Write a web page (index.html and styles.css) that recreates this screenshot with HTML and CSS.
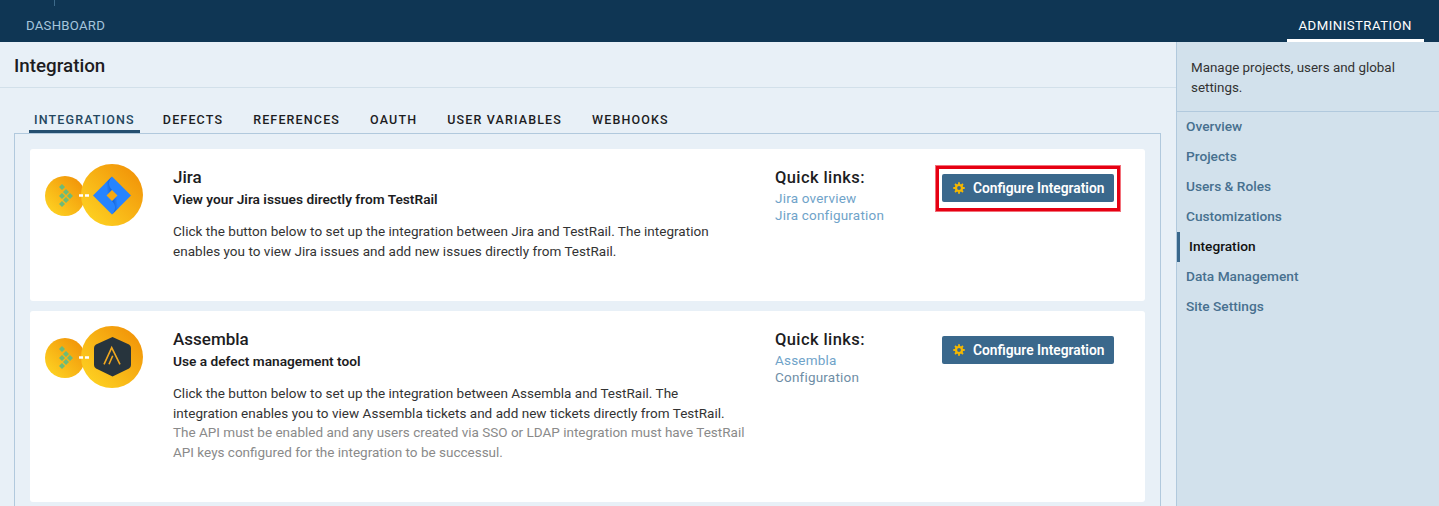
FILE: index.html
```html
<!DOCTYPE html>
<html lang="en">
<head>
    <meta charset="UTF-8">
    <meta name="viewport" content="width=device-width, initial-scale=1.0">
    <title>Integration</title>
    <link rel="stylesheet" href="styles.css">
</head>
<body>

    <svg class="defs" width="0" height="0">
        <defs>
            <linearGradient id="orange" x1="0" y1="1" x2="1" y2="0">
                <stop offset="0" stop-color="#ffd925"/>
                <stop offset="1" stop-color="#f08c05"/>
            </linearGradient>
            <linearGradient id="foldTop" x1="1" y1="0" x2="0" y2="0.3">
                <stop offset="0.1" stop-color="#1259c9"/>
                <stop offset="0.9" stop-color="#2684ff"/>
            </linearGradient>
            <linearGradient id="foldBottom" x1="0" y1="1" x2="1" y2="0.7">
                <stop offset="0.1" stop-color="#1259c9"/>
                <stop offset="0.9" stop-color="#2684ff"/>
            </linearGradient>
            <g id="railBadge">
                <circle cx="20" cy="32" r="20" fill="url(#orange)"/>
                <circle cx="67" cy="31" r="31" fill="url(#orange)"/>
                <g fill="#6dbb78">
                    <path d="M17 20l3 3-3 3-3-3z"/>
                    <path d="M21 25l3 3-3 3-3-3z"/>
                    <path d="M17 29l3 3-3 3-3-3z"/>
                    <path d="M25 29l3 3-3 3-3-3z"/>
                    <path d="M21 33l3 3-3 3-3-3z"/>
                    <path d="M17 37l3 3-3 3-3-3z"/>
                </g>
                <path d="M34 31.5h4M40 31.5h4" stroke="#fff" stroke-width="2.5"/>
            </g>
            <symbol id="gear" viewBox="0 0 12 12">
                <circle cx="6" cy="6" r="3" fill="none" stroke="#f5b800" stroke-width="2.2"/>
                <path d="M6 .3v2.2M6 9.500v2.200M.3 6h2.200M9.500 6h2.200M2 2l1.500 1.500M8.500 8.500L10 10M2 10l1.500-1.500M8.500 3.500L10 2" stroke="#f5b800" stroke-width="1.8"/>
            </symbol>
        </defs>
    </svg>

    <header class="topbar">
        <span class="topbar-tick"></span>
        <a class="topbar-link">DASHBOARD</a>
        <a class="topbar-link topbar-active">ADMINISTRATION</a>
    </header>

    <div class="layout">
        <main class="content">
            <h1 class="page-title">Integration</h1>

            <nav class="tabs">
                <a class="tab tab-active">INTEGRATIONS</a>
                <a class="tab">DEFECTS</a>
                <a class="tab">REFERENCES</a>
                <a class="tab">OAUTH</a>
                <a class="tab">USER VARIABLES</a>
                <a class="tab">WEBHOOKS</a>
            </nav>

            <section class="panel">
                <article class="card card-jira">
                    <svg class="logo" width="100" height="64" viewBox="0 0 100 64">
                        <use href="#railBadge"/>
                        <path d="M67 12.500l19 19-19 19-19-19z" fill="#2684ff"/>
                        <path d="M67 12.500l-7 7L61.500 31.500 67 26c-4-4-4-9 0-13.500z" fill="url(#foldTop)"/>
                        <path d="M67 50.500l7-7L72.500 31.500 67 37c4 4 4 9 0 13.500z" fill="url(#foldBottom)"/>
                        <path d="M67 26l5.500 5.500L67 37l-5.500-5.500z" fill="#f6a90f"/>
                    </svg>
                    <div class="card-text">
                        <h2 class="card-name">Jira</h2>
                        <h3 class="card-sub">View your Jira issues directly from TestRail</h3>
                        <p class="card-desc">Click the button below to set up the integration between Jira and TestRail. The integration<br>enables you to view Jira issues and add new issues directly from TestRail.</p>
                    </div>
                    <div class="quick">
                        <h4 class="quick-title">Quick links:</h4>
                        <a class="quick-link">Jira overview</a>
                        <a class="quick-link">Jira configuration</a>
                    </div>
                    <div class="action action-marked">
                        <button class="btn"><svg class="btn-icon" width="12" height="12"><use href="#gear"/></svg>Configure Integration</button>
                    </div>
                </article>

                <article class="card card-assembla">
                    <svg class="logo" width="100" height="64" viewBox="0 0 100 64">
                        <use href="#railBadge"/>
                        <path d="M67.500 11L84 18.500q2 1 2 3.500v17q0 2-2 3.500l-16.500 8-16.500-8q-2-1.500-2-3.500V22q0-2.500 2-3.500z" fill="#27343d"/>
                        <path d="M59 38.300L66.700 21.700 75 38.300M67.700 29.700L64 38.300" fill="none" stroke="#f0a81f" stroke-width="1.600"/>
                    </svg>
                    <div class="card-text">
                        <h2 class="card-name">Assembla</h2>
                        <h3 class="card-sub">Use a defect management tool</h3>
                        <p class="card-desc">Click the button below to set up the integration between Assembla and TestRail. The<br>integration enables you to view Assembla tickets and add new tickets directly from TestRail.<br><span class="card-note">The API must be enabled and any users created via SSO or LDAP integration must have TestRail<br>API keys configured for the integration to be successul.</span></p>
                    </div>
                    <div class="quick">
                        <h4 class="quick-title">Quick links:</h4>
                        <a class="quick-link">Assembla</a>
                        <a class="quick-link quick-muted">Configuration</a>
                    </div>
                    <div class="action">
                        <button class="btn"><svg class="btn-icon" width="12" height="12"><use href="#gear"/></svg>Configure Integration</button>
                    </div>
                </article>
            </section>
        </main>

        <aside class="sidebar">
            <p class="sidebar-intro">Manage projects, users and global settings.</p>
            <ul class="sidebar-menu">
                <li class="sidebar-item">Overview</li>
                <li class="sidebar-item">Projects</li>
                <li class="sidebar-item">Users &amp; Roles</li>
                <li class="sidebar-item">Customizations</li>
                <li class="sidebar-item sidebar-active">Integration</li>
                <li class="sidebar-item">Data Management</li>
                <li class="sidebar-item">Site Settings</li>
            </ul>
        </aside>
    </div>

</body>
</html>
```

FILE: styles.css
```css
body {
    margin: 0;
    height: 506px;
    overflow: hidden;
    background-color: #e8f0f7;
    font-family: Roboto, "Liberation Sans", sans-serif;
    font-size: 14px;
    color: #1d1d1f;
}
.defs {
    position: absolute;
}

/* top bar */
.topbar {
    position: relative;
    display: flex;
    justify-content: space-between;
    height: 42px;
    padding: 0 15px;
    background-color: #0f3654;
    box-sizing: border-box;
}
.topbar-tick {
    position: absolute;
    left: 54px;
    top: 0;
    width: 1px;
    height: 6px;
    background-color: #3d6a8a;
}
.topbar-link {
    padding: 17px 11px 0;
    font-size: 13.2px;
    line-height: 17px;
    letter-spacing: 0.25px;
    color: #a5c5dc;
}
.topbar-active {
    height: 42px;
    padding: 17px 12px 0;
    box-sizing: border-box;
    letter-spacing: 0.47px;
    color: #fff;
    border-bottom: 3px solid #fff;
}

.layout {
    display: flex;
    height: 464px;
}
.content {
    flex: 1;
    min-width: 0;
}

.page-title {
    margin: 0;
    height: 46px;
    padding: 13px 14px 0;
    box-sizing: border-box;
    border-bottom: 1px solid #d2e0ea;
    font-size: 18.8px;
    line-height: 22px;
    font-weight: 500;
}

/* tabs */
.tabs {
    display: flex;
    gap: 20px;
    margin: 23px 0 0 29px;
    height: 22px;
}
.tab {
    padding: 0 5px;
    font-size: 12.5px;
    line-height: 17px;
    font-weight: 500;
    letter-spacing: 1.15px;
}
.tab-active {
    height: 19px;
    margin-right: -2px;
    border-bottom: 3px solid #244f70;
    color: #24475f;
}

/* panel with the cards */
.panel {
    margin: 0 15px 0 14px;
    padding: 15px;
    height: 360px;
    background-color: #e8f0f7;
    border: 1px solid #b1c9dd;
    display: flex;
    flex-direction: column;
    gap: 10px;
}
.card {
    display: flex;
    flex-shrink: 0;
    padding: 15px 15px 0;
    background-color: #fff;
    border-radius: 3px;
    box-sizing: border-box;
}
.card-jira {
    height: 152px;
}
.card-assembla {
    height: 191px;
}
.logo {
    flex: none;
    margin-right: 28px;
}
.card-text {
    width: 602px;
}
.card-name {
    margin: 3px 0 0;
    font-size: 17px;
    line-height: 20px;
    font-weight: 500;
}
.card-sub {
    margin: 2px 0 0;
    font-size: 13.7px;
    line-height: 20px;
    font-weight: 600;
}
.card-desc {
    margin: 13px 0 0;
    font-size: 13.5px;
    line-height: 19.5px;
    letter-spacing: 0.03px;
    color: #333;
}
.card-note {
    letter-spacing: 0;
    color: #8a8a8a;
}

/* quick links */
.quick {
    width: 167px;
    display: flex;
    flex-direction: column;
    align-items: flex-start;
}
.quick-title {
    margin: 4px 0 2px;
    font-size: 16.5px;
    line-height: 20px;
    font-weight: 500;
    letter-spacing: 0.4px;
}
.quick-link {
    font-size: 13.5px;
    line-height: 17px;
    letter-spacing: 0.2px;
    color: #6fa3c9;
}
.quick-muted {
    color: #6f8ea6;
}

/* button */
.action {
    padding-top: 10px;
}
.action-marked {
    align-self: flex-start;
    margin: 1px 0 0 -7px;
    padding: 8px 6px 9px;
    border: 1px solid #f2707a;
    box-shadow: inset 0 0 0 3px #e60012;
}
.btn {
    display: flex;
    align-items: center;
    width: 172px;
    height: 28px;
    padding: 0 0 0 11px;
    border: none;
    border-radius: 2px;
    background-color: #3a688c;
    color: #fff;
    font-family: Roboto, "Liberation Sans", sans-serif;
    font-size: 13.8px;
    font-weight: 600;
    white-space: nowrap;
}
.btn-icon {
    flex: none;
    margin-right: 8px;
}

/* right side */
.sidebar {
    flex: none;
    width: 262px;
    background-color: #d2e1ec;
    border-left: 1px solid #b1c9dd;
}
.sidebar-intro {
    margin: 0;
    height: 70px;
    padding: 16px 30px 0 14px;
    box-sizing: border-box;
    border-bottom: 1px solid #b1c9dd;
    font-size: 13.4px;
    line-height: 20px;
    color: #333;
}
.sidebar-menu {
    margin: 0;
    padding: 0;
    list-style: none;
}
.sidebar-item {
    height: 30px;
    padding-left: 9px;
    font-size: 13.7px;
    line-height: 28px;
    font-weight: 500;
    color: #47708f;
}
.sidebar-active {
    border-left: 3px solid #3a688c;
    color: #111;
}
```
